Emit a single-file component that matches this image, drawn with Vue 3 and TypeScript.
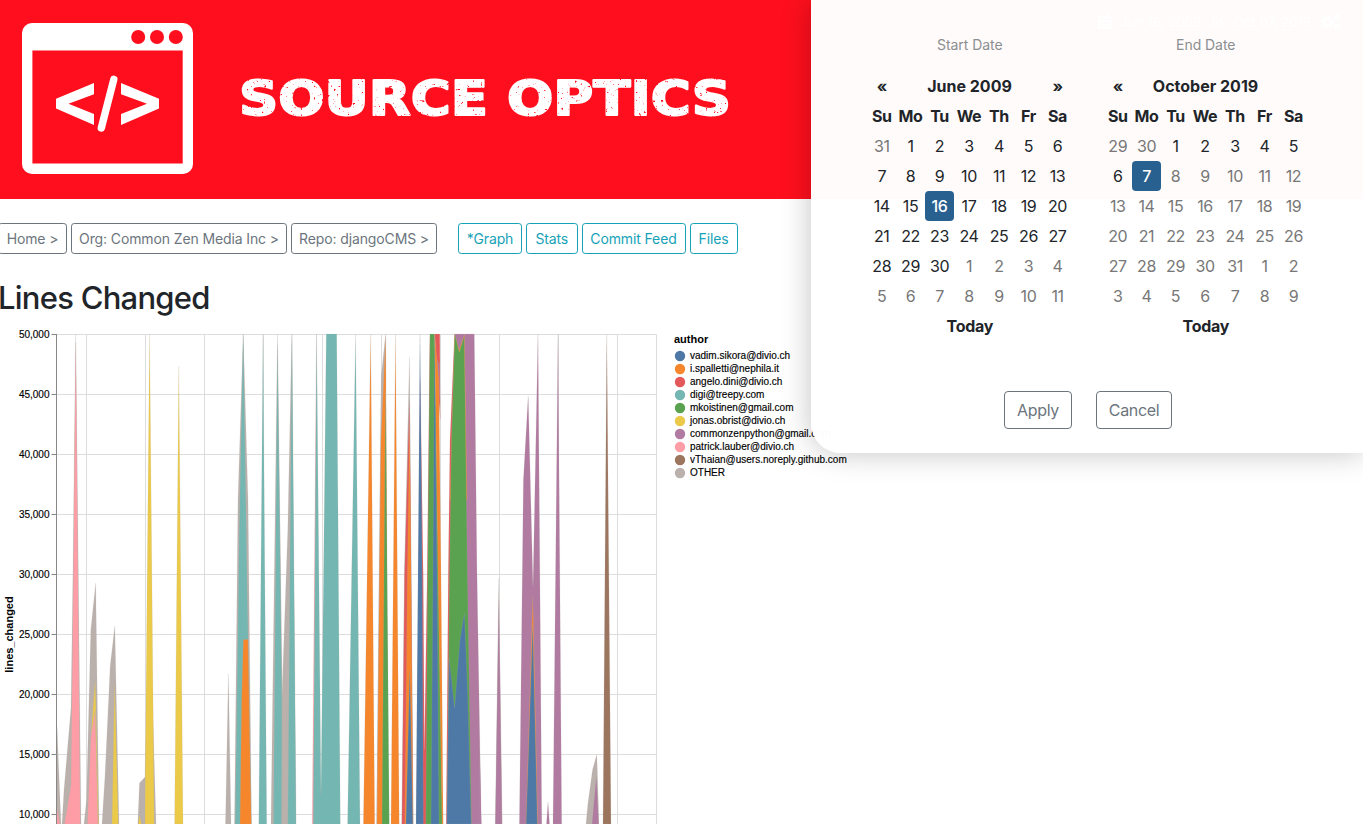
<script setup lang="ts">
interface NavItem { label: string; width: number }
interface Area { color: string; points: string }
interface Calendar { label: string; title: string; next: boolean; first: number; prevLast: number; days: number; selected: number; disabledAfter: number }

const crumbs: NavItem[] = [
  { label: 'Home >', width: 69 },
  { label: 'Org: Common Zen Media Inc >', width: 216 },
  { label: 'Repo: djangoCMS >', width: 146 },
]
const views: NavItem[] = [
  { label: '*Graph', width: 64 },
  { label: 'Stats', width: 51.5 },
  { label: 'Commit Feed', width: 104 },
  { label: 'Files', width: 48 },
]

const blue = '#4e79a7', orange = '#f5862c', red = '#e45859', teal = '#74b6b1', green = '#5aa250'
const yellow = '#ebc949', purple = '#b07aa1', pink = '#ff9da6', brown = '#9c755f', gray = '#bab0ac'

const legend = [
  { name: 'vadim.sikora@divio.ch', color: blue },
  { name: 'i.spalletti@nephila.it', color: orange },
  { name: 'angelo.dini@divio.ch', color: red },
  { name: 'digi@treepy.com', color: teal },
  { name: 'mkoistinen@gmail.com', color: green },
  { name: 'jonas.obrist@divio.ch', color: yellow },
  { name: 'commonzenpython@gmail.com', color: purple },
  { name: 'patrick.lauber@divio.ch', color: pink },
  { name: 'vThaian@users.noreply.github.com', color: brown },
  { name: 'OTHER', color: gray },
]

const ticks = Array.from({ length: 9 }, (_, i) => ({
  y: 334.5 + i * 60,
  label: (50000 - i * 5000).toLocaleString('en-US'),
}))
const columns = [86.5, 145.5, 204.5, 263.5, 322.5, 381.5, 440.5, 499.5, 558.5, 617.5, 656.5]

const areas: Area[] = [
  { color: gray, points: '57,727 61,824 57,824' },
  { color: pink, points: '57,808 60,824 57,824' },
  { color: gray, points: '62,824 64,790 71,708 73,570 75.7,334 77,450 81,824' },
  { color: pink, points: '64.5,824 71,786 73.2,600 75.7,342 80.2,824' },
  { color: gray, points: '84,824 86.5,800 90.8,630 95.7,583 99,824' },
  { color: pink, points: '87.5,824 91,735 95.2,710 98,824' },
  { color: yellow, points: '91,735 95.2,680 98.6,824 98,824 95.2,710' },
  { color: gray, points: '102,824 105,776 110.2,666 114.8,626 119,824' },
  { color: yellow, points: '112,824 114.6,682 118.3,824' },
  { color: gray, points: '137.8,824 139.5,783 145,777 149.5,600 156,824' },
  { color: yellow, points: '138.5,824 139.2,815 141.5,824' },
  { color: yellow, points: '145,824 145.3,770 149.6,334 154.2,824' },
  { color: yellow, points: '174.6,824 178.8,366 183,824' },
  { color: gray, points: '225.5,824 228.4,674 231,824' },
  { color: gray, points: '234.5,824 238,500 243.2,334 248,500 251.5,824' },
  { color: teal, points: '235.2,824 239.3,530 243.2,334 247.2,590 251.2,824' },
  { color: orange, points: '240,824 241.7,697 243.4,639.5 248,639.5 251.2,824' },
  { color: teal, points: '258.8,824 263,334 266.7,824' },
  { color: gray, points: '271,824 277.5,334 284,824' },
  { color: teal, points: '273.5,824 277.5,345 283.3,824' },
  { color: gray, points: '281.5,824 282,695 287.8,530 291.8,334 296,824' },
  { color: teal, points: '287.8,824 292,334 296,824' },
  { color: pink, points: '312.2,824 316.5,334 318,824' },
  { color: teal, points: '313.2,824 316.6,334 321,795 326.3,334 336.7,334 340.3,824' },
  { color: teal, points: '347.6,824 355.6,334 360,824' },
  { color: orange, points: '363.4,824 370.7,334 374.7,824' },
  { color: gray, points: '376.5,824 380.5,430 381.2,376 385.7,334 388,824' },
  { color: orange, points: '377,824 379.6,560 381,440 385.7,336 388,824' },
  { color: green, points: '382,824 385.5,390 389.3,824' },
  { color: orange, points: '391,824 395.5,334 399.2,824' },
  { color: gray, points: '401.7,824 404.3,574 409.5,357 413.3,824' },
  { color: red, points: '401.9,824 404.6,574 409.4,400 411,560 413,824' },
  { color: orange, points: '404.8,824 407.4,574 409.7,420 413,824' },
  { color: blue, points: '405.9,824 409.8,670 412.8,824' },
  { color: red, points: '416.5,824 420.2,380 423.2,574 424.4,750 427.2,574 429.9,334 432,824' },
  { color: blue, points: '416,824 420,334 422.2,574 423.4,824' },
  { color: green, points: '425.8,824 427.7,574 430,334 434.8,334 442.4,824' },
  { color: red, points: '434.6,334 439.8,334 440.2,420' },
  { color: purple, points: '437,360 439.2,364 440,400' },
  { color: orange, points: '434.6,334 438.8,380 441,574 443.2,824 442,824 438,574' },
  { color: blue, points: '431,824 433,574 434.4,334 437,574 439,824' },
  { color: red, points: '446.2,824 448.3,574 450,440 454.6,334 456,824' },
  { color: purple, points: '454.6,334 474.3,334 477,574 481.2,824 468,824' },
  { color: orange, points: '454.6,334 459.3,350 464.5,334 467,500 450,500' },
  { color: green, points: '447.2,824 449.5,574 451.5,440 454.8,334 459.3,352.5 464.2,336 467.4,574 471.5,824' },
  { color: blue, points: '446.8,824 449.2,658 454.6,708 459.8,641 464.4,613 467.5,690 471.2,824' },
  { color: purple, points: '479.5,745 481.4,824 479,824' },
  { color: gray, points: '495.3,824 498.8,578 502.2,824' },
  { color: purple, points: '495.4,824 498.8,600 502,824' },
  { color: purple, points: '519.4,824 523.4,480 528.2,396 533,587 538,334 541.8,824' },
  { color: orange, points: '526,824 532.8,596 537.8,824' },
  { color: blue, points: '526.1,824 532.7,625 537.4,824' },
  { color: purple, points: '546.5,824 548,802 549.5,824' },
  { color: purple, points: '553,824 558,334 561.7,824' },
  { color: gray, points: '586,824 588,803 592.5,770 596.8,754.5 599,824' },
  { color: purple, points: '592,824 596.4,776 598.6,824' },
  { color: brown, points: '603,824 606.8,334 611,824' },
]

const weekdays = ['Su', 'Mo', 'Tu', 'We', 'Th', 'Fr', 'Sa']
const calendars: Calendar[] = [
  { label: 'Start Date', title: 'June 2009', next: true, first: 1, prevLast: 31, days: 30, selected: 16, disabledAfter: 30 },
  { label: 'End Date', title: 'October 2019', next: false, first: 2, prevLast: 30, days: 31, selected: 7, disabledAfter: 7 },
]

function cells(c: Calendar) {
  return Array.from({ length: 42 }, (_, i) => {
    const n = i - c.first + 1
    if (n < 1) return { text: c.prevLast + n, muted: true, active: false }
    if (n > c.days) return { text: n - c.days, muted: true, active: false }
    return { text: n, muted: n > c.disabledAfter, active: n === c.selected }
  })
}
</script>

<template>
  <div class="page">
    <header class="banner">
      <svg class="brand" width="760" height="199" viewBox="0 0 760 199">
        <defs>
          <filter id="worn" x="-2%" y="-10%" width="104%" height="120%">
            <feTurbulence type="fractalNoise" baseFrequency="0.36" numOctaves="2" seed="8" result="noise" />
            <feColorMatrix in="noise" type="matrix" values="0 0 0 0 0  0 0 0 0 0  0 0 0 0 0  -9 0 0 0 7.2" result="mask" />
            <feComposite in="SourceGraphic" in2="mask" operator="in" />
          </filter>
        </defs>
        <rect x="22" y="23" width="171" height="151" rx="10" fill="#fff" />
        <rect x="32.4" y="50.5" width="150.3" height="113" fill="#ff0f1d" />
        <circle cx="138.2" cy="37" r="7" fill="#ff0f1d" />
        <circle cx="157" cy="37" r="7" fill="#ff0f1d" />
        <circle cx="175.8" cy="37" r="7" fill="#ff0f1d" />
        <path d="M56 98.7 94 83V94.2L68.5 103.8 94 114V125L56 108.6ZM159 98.7 121 83V94.2L147 103.8 121 114V125L159 108.6Z" fill="#fff" />
        <path d="M113.8 79.3 101.3 128" stroke="#fff" stroke-width="7.4" stroke-linecap="round" />
        <text class="wordmark" x="239" y="114.8" textLength="492" lengthAdjust="spacingAndGlyphs" filter="url(#worn)">SOURCE OPTICS</text>
      </svg>
      <div class="range">
        <svg width="14" height="16" viewBox="0 0 14 16">
          <path d="M0 6h14v9H0zM0 2h3V0h2v2h4V0h2v2h3v3H0z" fill="#fff" />
          <path d="M3 8h2v2H3zm3 0h2v2H6zm3 0h2v2H9zM3 11h2v2H3zm3 0h2v2H6zm3 0h2v2H9z" fill="#ff0f1d" />
        </svg>
        <span class="date">Jun 16, 2009</span><span>to</span><span class="date">Oct 07, 2019</span>
        <svg width="20" height="16" viewBox="0 0 20 16" fill="none" stroke="#fff">
          <circle cx="6.5" cy="8" r="3.6" stroke-width="3" />
          <circle cx="6.5" cy="8" r="5.6" stroke-width="2" stroke-dasharray="2.4 2" />
          <circle cx="16" cy="3.5" r="2" stroke-width="2" />
          <circle cx="16" cy="12.5" r="2" stroke-width="2" />
        </svg>
      </div>
    </header>

    <nav class="nav">
      <a v-for="n in crumbs" :key="n.label" class="btn" :style="{ width: n.width + 'px' }">{{ n.label }}</a>
      <span class="spacer"></span>
      <a v-for="n in views" :key="n.label" class="btn info" :style="{ width: n.width + 'px' }">{{ n.label }}</a>
    </nav>

    <h2 class="heading">Lines Changed</h2>

    <svg class="chart" width="870" height="500" viewBox="0 324 870 500">
      <g stroke="#ddd">
        <path v-for="t in ticks" :key="t.y" :d="`M56.5 ${t.y}H656.5`" />
        <path v-for="x in columns" :key="x" :d="`M${x} 334.5V824`" />
      </g>
      <polygon v-for="(a, i) in areas" :key="i" :points="a.points" :fill="a.color" class="area" />
      <path d="M56.5 334V824" stroke="#888" />
      <g v-for="t in ticks" :key="t.label">
        <path :d="`M51.5 ${t.y}H56.5`" stroke="#888" />
        <text class="tick" x="49.5" :y="t.y + 3.5">{{ t.label }}</text>
      </g>
      <text class="axis" transform="translate(12.5 634.5) rotate(-90)">lines_changed</text>
      <text class="legend-title" x="674" y="343">author</text>
      <g v-for="(l, i) in legend" :key="l.name">
        <circle cx="680" :cy="356 + i * 13" r="5.2" :fill="l.color" />
        <text class="legend" x="690" :y="359 + i * 13">{{ l.name }}</text>
      </g>
    </svg>

    <aside class="panel">
      <div class="pickers">
        <section v-for="c in calendars" :key="c.title" class="picker">
          <div class="label">{{ c.label }}</div>
          <div class="grid">
            <b>«</b><b class="title">{{ c.title }}</b><b>{{ c.next ? '»' : '' }}</b>
            <b v-for="w in weekdays" :key="w">{{ w }}</b>
            <span v-for="(d, i) in cells(c)" :key="i" :class="{ muted: d.muted, active: d.active }">{{ d.text }}</span>
            <b class="today">Today</b>
          </div>
        </section>
      </div>
      <div class="actions">
        <button class="apply">Apply</button>
        <button class="cancel">Cancel</button>
      </div>
    </aside>
  </div>
</template>

<style>
body { margin: 0; overflow: hidden; background: #fff; }
</style>

<style scoped>
.page { position: relative; width: 1363px; height: 824px; overflow: hidden; font-family: Inter, "Liberation Sans", sans-serif; font-size: 16px; color: #212529; }
.banner { display: flex; justify-content: space-between; height: 199px; background: #ff0f1d; }
.brand { display: block; }
.wordmark { font: bold 48px "DejaVu Sans", sans-serif; fill: #fff; stroke: #fff; stroke-width: 2px; stroke-linejoin: round; }
.range { display: flex; align-items: center; gap: 10px; height: 44px; margin-right: 22px; color: #fff; font-size: 13.3px; }
.range svg:first-child { margin-right: -2px; }
.date { border-bottom: 1px dotted #fff; }
.nav { display: flex; gap: 4px; margin: 24px 0 0 -2px; }
.spacer { width: 13px; }
.btn { box-sizing: border-box; height: 31px; border: 1px solid #6c757d; border-radius: 3.2px; color: #6c757d; font-size: 14px; line-height: 30px; letter-spacing: -0.12px; text-align: center; white-space: nowrap; }
.info { border-color: #17a2b8; color: #17a2b8; }
.heading { margin: 24px 0 0 -2px; height: 38px; font-size: 31px; line-height: 39px; font-weight: 500; letter-spacing: -0.75px; white-space: nowrap; }
.chart { display: block; margin-top: 8px; fill: none; }
.area { stroke: #bab0ac; stroke-opacity: 0.2; stroke-width: 0.8px; }
.tick { font: 10px "Liberation Sans", sans-serif; text-anchor: end; fill: #000; stroke: #000; stroke-width: 0.15px; }
.legend { font: 10px "Liberation Sans", sans-serif; fill: #000; stroke: #000; stroke-width: 0.15px; }
.legend-title { font: bold 11px "Liberation Sans", sans-serif; fill: #000; }
.axis { font: bold 11px "Liberation Sans", sans-serif; text-anchor: middle; fill: #000; }
.panel { position: absolute; top: 0; right: 0; box-sizing: border-box; width: 552px; height: 453px; padding: 34px 0 0 56.5px; border-bottom-left-radius: 30px; background: rgba(255, 255, 255, 0.985); box-shadow: 0 0 30px rgba(0, 0, 0, 0.24); }
.pickers { display: flex; gap: 31.5px; }
.picker { width: 204.5px; }
.label { height: 37px; color: #8b8f91; font-size: 14px; line-height: 22px; letter-spacing: -0.05px; text-align: center; }
.grid { display: grid; grid-template-columns: 28.5px 29px 29px 30px 30px 29px 29px; grid-auto-rows: 30px; line-height: 30px; text-align: center; letter-spacing: -0.4px; }
.grid b { font-weight: 650; white-space: nowrap; }
.grid .title { grid-column: span 5; letter-spacing: 0; }
.grid .today { grid-column: 1 / -1; letter-spacing: -0.3px; }
.muted { color: #777; }
.active { border-radius: 4px; background: #286090; color: #fff; font-weight: 500; }
.actions { display: flex; gap: 24px; margin: 50px 0 0 136.5px; }
.actions button { box-sizing: border-box; height: 38px; padding: 0; border: 1px solid #6c757d; border-radius: 4px; background: transparent; color: #6c757d; font: 16px Inter, sans-serif; letter-spacing: -0.35px; }
.apply { width: 68px; }
.cancel { width: 76px; }
</style>
